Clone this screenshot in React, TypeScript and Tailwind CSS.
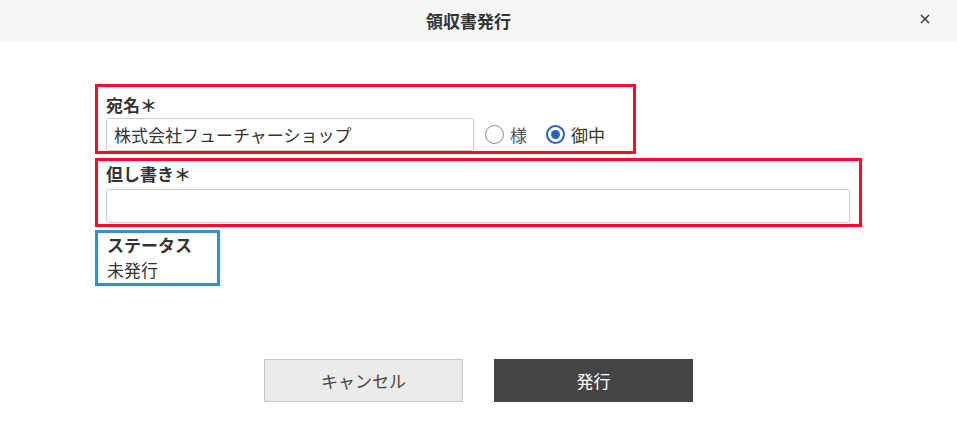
const font = { fontFamily: '"Noto Sans CJK JP", "Noto Sans", sans-serif' };

export default function App() {
  return (
    <div className="w-[957px] h-[431px] bg-white text-[#333] text-[17px]" style={font}>
      {/* Header */}
      <div className="relative h-[41px] bg-[#f7f7f7] flex items-center justify-center">
        <h1 className="font-bold text-[17px] leading-none pr-[20px] text-[#333]">領収書発行</h1>
        <button className="absolute right-[24px] top-[11px] w-[16px] h-[16px] flex items-center justify-center">
          <svg width="10" height="10" viewBox="0 0 10 10" stroke="#333" strokeWidth="1.4">
            <path d="M1 1 L9 9 M9 1 L1 9" />
          </svg>
        </button>
      </div>

      {/* Form */}
      <div className="px-[95px] pt-[43px] flex flex-col items-start">
        <div className="border-[3px] border-[#ff0a2e] pl-[8px] pr-[28px] pt-[5px] pb-0">
          <div className="font-bold leading-[26px]">宛名＊</div>
          <div className="flex items-center">
            <input
              className="w-[368px] h-[33px] border border-[#ccc] rounded-[3px] px-[7px] text-[17px] text-[#333] outline-none"
              defaultValue="株式会社フューチャーショップ"
              style={font}
            />
            <label className="flex items-center ml-[11px] gap-[6px] text-[#555]">
              <span className="w-[19px] h-[19px] rounded-full border-[1.5px] border-[#8a8a8a] bg-white" />
              <span>様</span>
            </label>
            <label className="flex items-center ml-[19px] gap-[6px]">
              <span className="w-[19px] h-[19px] rounded-full border-[2px] border-[#2c62b8] flex items-center justify-center">
                <span className="w-[9px] h-[9px] rounded-full bg-[#2c62b8]" />
              </span>
              <span>御中</span>
            </label>
          </div>
        </div>

        <div className="mt-[4px] w-full border-[3px] border-[#ff0a2e] pl-[8px] pr-[9px] pt-0 pb-[1px]">
          <div className="font-bold leading-[26px]">但し書き＊</div>
          <input className="mt-[2px] w-full h-[34px] border border-[#ccc] rounded-[3px] px-[7px] outline-none" style={font} />
        </div>

        <div className="mt-[3px] border-[3px] border-[#3a87e0] pl-[9px] pr-[25px] pt-0 pb-[1px]">
          <div className="font-bold leading-[24px]">ステータス</div>
          <div className="leading-[25px]">未発行</div>
        </div>
      </div>

      {/* Buttons */}
      <div className="flex justify-center gap-[31px] mt-[73px]">
        <button className="w-[199px] h-[43px] bg-[#ebebeb] border border-[#c8c8c8] text-[#444] text-[17px]" style={font}>
          キャンセル
        </button>
        <button className="w-[199px] h-[43px] bg-[#444] text-white text-[17px]" style={font}>
          発行
        </button>
      </div>
    </div>
  );
}
